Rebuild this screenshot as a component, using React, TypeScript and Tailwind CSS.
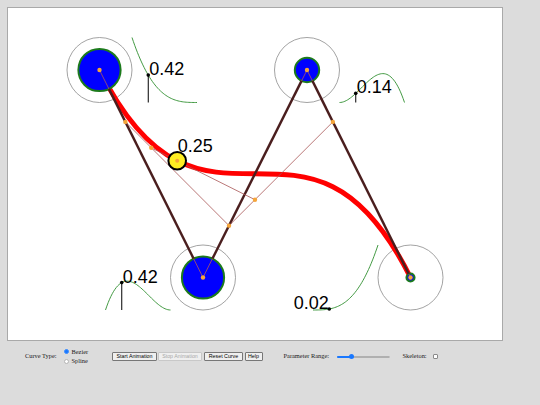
type Pt = { x: number; y: number };

// control points in page pixels
const pts: Pt[] = [
  { x: 99.5, y: 70 },
  { x: 203, y: 277.5 },
  { x: 307, y: 70 },
  { x: 410.5, y: 277.5 },
];
const t = 0.25;
const R = 32.5;

const bern = [
  (s: number) => (1 - s) ** 3,
  (s: number) => 3 * s * (1 - s) ** 2,
  (s: number) => 3 * s * s * (1 - s),
  (s: number) => s ** 3,
];

const lerp = (a: Pt, b: Pt, s: number): Pt => ({ x: a.x + (b.x - a.x) * s, y: a.y + (b.y - a.y) * s });

const q = [lerp(pts[0], pts[1], t), lerp(pts[1], pts[2], t), lerp(pts[2], pts[3], t)];
const r = [lerp(q[0], q[1], t), lerp(q[1], q[2], t)];
const s = lerp(r[0], r[1], t);
const radii = pts.map((_, i) => R * Math.sqrt(bern[i](t)));

const graphX = (i: number) => (i % 2 === 0 ? pts[i].x + R : pts[i].x - 3 * R);

function graphPath(i: number) {
  const x0 = graphX(i);
  const base = pts[i].y + R;
  const out: string[] = [];
  for (let k = 0; k <= 48; k++) {
    const u = k / 48;
    out.push(`${k === 0 ? "M" : "L"}${(x0 + u * 2 * R).toFixed(2)},${(base - bern[i](u) * 2 * R).toFixed(2)}`);
  }
  return out.join(" ");
}

// thick skeleton segment, trimmed to the edges of the weight circles
function trimmed(i: number) {
  const a = pts[i];
  const b = pts[i + 1];
  const len = Math.hypot(b.x - a.x, b.y - a.y);
  const p = lerp(a, b, radii[i] / len);
  const e = lerp(b, a, radii[i + 1] / len);
  return { x1: p.x, y1: p.y, x2: e.x, y2: e.y };
}

function Canvas() {
  const sk = pts.map((p) => `${p.x},${p.y}`).join(" ");
  return (
    <svg width={494} height={332} viewBox="8 8 494 332" className="block">
      {pts.map((p, i) => (
        <circle key={i} cx={p.x} cy={p.y} r={R} fill="none" stroke="#8c8c8c" strokeWidth={0.8} />
      ))}

      <path
        d={`M${pts[0].x},${pts[0].y} C${pts[1].x},${pts[1].y} ${pts[2].x},${pts[2].y} ${pts[3].x},${pts[3].y}`}
        fill="none"
        stroke="#ff0000"
        strokeWidth={5}
      />

      {pts.map((p, i) => (
        <circle key={i} cx={p.x} cy={p.y} r={radii[i]} fill="#0000ff" stroke="#1c7a1c" strokeWidth={2} />
      ))}

      <polyline points={sk} fill="none" stroke="#b05a5a" strokeWidth={0.8} />
      {[0, 1, 2].map((i) => (
        <line key={i} {...trimmed(i)} stroke="#4a1e1e" strokeWidth={2.4} />
      ))}

      <polyline points={q.map((p) => `${p.x},${p.y}`).join(" ")} fill="none" stroke="#a85656" strokeWidth={0.8} />
      <line x1={r[0].x} y1={r[0].y} x2={r[1].x} y2={r[1].y} stroke="#a85656" strokeWidth={0.8} />

      {[...pts, ...q, ...r].map((p, i) => (
        <circle key={i} cx={p.x} cy={p.y} r={2.2} fill="#f5a53a" />
      ))}

      <circle cx={s.x} cy={s.y} r={8.8} fill="#ffee22" stroke="#000" strokeWidth={2} />
      <circle cx={s.x} cy={s.y} r={2} fill="#f5a53a" />
      <text x={s.x + 0.5} y={s.y - 8.5} fontSize={18} fontFamily="'Liberation Sans', Arial, sans-serif" fill="#000">
        {t.toFixed(2)}
      </text>

      {pts.map((p, i) => {
        const v = bern[i](t);
        const dx = graphX(i) + t * 2 * R;
        const dy = p.y + R - v * 2 * R;
        return (
          <g key={i}>
            <path d={graphPath(i)} fill="none" stroke="#2f8f2f" strokeWidth={0.9} />
            <line x1={dx} y1={dy} x2={dx} y2={p.y + R} stroke="#000" strokeWidth={1} />
            <circle cx={dx} cy={dy} r={1.8} fill="#000" />
            <text
              x={i === 3 ? dx - 0.5 : dx + 1}
              y={dy}
              textAnchor={i === 3 ? "end" : "start"}
              fontSize={18}
              fontFamily="'Liberation Sans', Arial, sans-serif"
              fill="#000"
            >
              {v.toFixed(2)}
            </text>
          </g>
        );
      })}
    </svg>
  );
}

function Btn({ label, w, disabled }: { label: string; w: string; disabled?: boolean }) {
  return (
    <button
      disabled={disabled}
      className={`${w} h-[8.5px] flex items-center justify-center rounded-[1px] border-[0.6px] bg-[#efefef] text-[5.3px] leading-none whitespace-nowrap font-['Liberation_Sans',Arial,sans-serif] ${
        disabled ? "border-[#c8c8c8] text-[#a8a8a8] bg-[#e6e6e6]" : "border-[#777] text-black"
      }`}
    >
      {label}
    </button>
  );
}

export default function App() {
  const serif = "font-['Liberation_Serif','Times_New_Roman',serif] text-[6.4px] leading-none text-[#1a1a1a] whitespace-nowrap";
  return (
    <div className="w-[540px] h-[405px] bg-[#dcdcdc] overflow-hidden">
      <div className="pt-[7px] pl-[7px]">
        <div className="w-[496px] h-[334px] bg-white border border-[#a9a9a9]">
          <Canvas />
        </div>
      </div>

      <div className="flex items-center h-[18px] mt-[6.5px] pl-[25px]">
        <div className={`w-[39px] ${serif}`}>Curve Type:</div>
        <div className="w-[48px] flex flex-col gap-[3px]">
          <div className="flex items-center gap-[2.5px]">
            <span className="w-[5px] h-[5px] rounded-full bg-[#1a78ff] border-[1px] border-[#3b8cff]" />
            <span className={serif}>Bezier</span>
          </div>
          <div className="flex items-center gap-[2.5px]">
            <span className="w-[5px] h-[5px] rounded-full bg-white border-[0.6px] border-[#b5b5b5]" />
            <span className={serif}>Spline</span>
          </div>
        </div>
        <div className="flex items-center">
          <Btn label="Start Animation" w="w-[45px]" />
          <div className="ml-[1px]">
            <Btn label="Stop Animation" w="w-[44px]" disabled />
          </div>
          <div className="ml-[2px]">
            <Btn label="Reset Curve" w="w-[39px]" />
          </div>
          <div className="ml-[1.5px]">
            <Btn label="Help" w="w-[18px]" />
          </div>
        </div>
        <div className={`ml-[21px] w-[53px] ${serif}`}>Parameter Range:</div>
        <div className="relative w-[53px] h-[6px] flex items-center">
          <div className="w-full h-[2px] rounded-full bg-[#efefef] border-[0.5px] border-[#b0b0b0]" />
          <div className="absolute left-0 w-[15px] h-[2px] rounded-full bg-[#1a78ff]" />
          <div className="absolute left-[12px] w-[5.5px] h-[5.5px] rounded-full bg-[#1a78ff]" />
        </div>
        <div className={`ml-[13px] w-[30px] ${serif}`}>Skeleton:</div>
        <span className="w-[5.5px] h-[5.5px] rounded-[1px] bg-white border-[0.6px] border-[#8a8a8a]" />
      </div>
    </div>
  );
}
